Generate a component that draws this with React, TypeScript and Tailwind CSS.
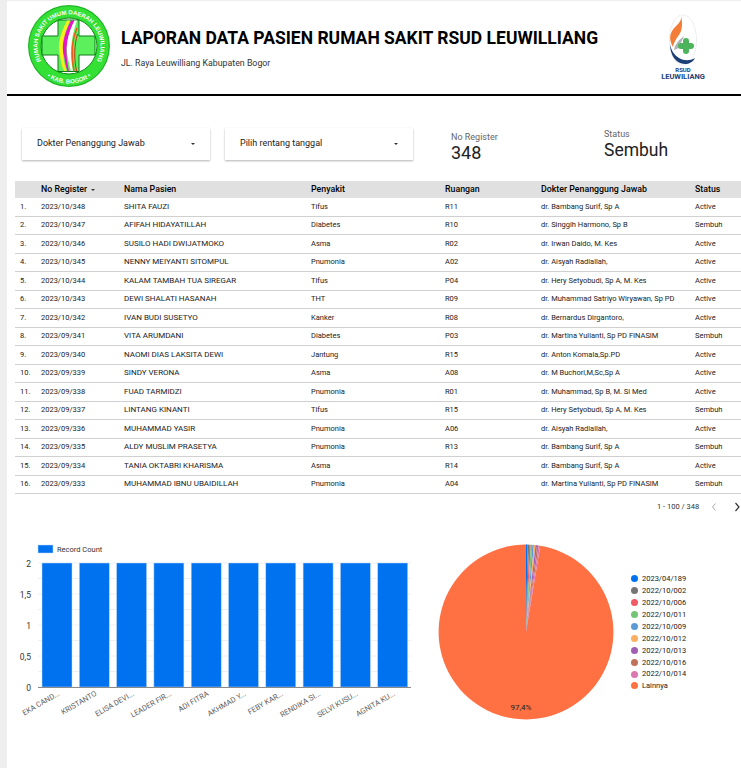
const rows = [
  ["2023/10/348", "SHITA FAUZI", "Tifus", "R11", "dr. Bambang Surif, Sp A", "Active"],
  ["2023/10/347", "AFIFAH HIDAYATILLAH", "Diabetes", "R10", "dr. Singgih Harmono, Sp B", "Sembuh"],
  ["2023/10/346", "SUSILO HADI DWIJATMOKO", "Asma", "R02", "dr. Irwan Daido, M. Kes", "Active"],
  ["2023/10/345", "NENNY MEIYANTI SITOMPUL", "Pnumonia", "A02", "dr. Aisyah Radiallah,", "Active"],
  ["2023/10/344", "KALAM TAMBAH TUA SIREGAR", "Tifus", "P04", "dr. Hery Setyobudi, Sp A, M. Kes", "Active"],
  ["2023/10/343", "DEWI SHALATI HASANAH", "THT", "R09", "dr. Muhammad Satriyo Wiryawan, Sp PD", "Active"],
  ["2023/10/342", "IVAN BUDI SUSETYO", "Kanker", "R08", "dr. Bernardus Dirgantoro,", "Active"],
  ["2023/09/341", "VITA ARUMDANI", "Diabetes", "P03", "dr. Martina Yulianti, Sp PD FINASIM", "Sembuh"],
  ["2023/09/340", "NAOMI DIAS LAKSITA DEWI", "Jantung", "R15", "dr. Anton Komala,Sp.PD", "Active"],
  ["2023/09/339", "SINDY VERONA", "Asma", "A08", "dr. M Buchori,M,Sc,Sp A", "Active"],
  ["2023/09/338", "FUAD TARMIDZI", "Pnumonia", "R01", "dr. Muhammad, Sp B, M. Si Med", "Active"],
  ["2023/09/337", "LINTANG KINANTI", "Tifus", "R15", "dr. Hery Setyobudi, Sp A, M. Kes", "Sembuh"],
  ["2023/09/336", "MUHAMMAD YASIR", "Pnumonia", "A06", "dr. Aisyah Radiallah,", "Active"],
  ["2023/09/335", "ALDY MUSLIM PRASETYA", "Pnumonia", "R13", "dr. Bambang Surif, Sp A", "Sembuh"],
  ["2023/09/334", "TANIA OKTABRI KHARISMA", "Asma", "R14", "dr. Bambang Surif, Sp A", "Active"],
  ["2023/09/333", "MUHAMMAD IBNU UBAIDILLAH", "Pnumonia", "A04", "dr. Martina Yulianti, Sp PD FINASIM", "Sembuh"],
];

const barLabels = ["EKA CAND...", "KRISTANTO", "ELISA DEVI...", "LEADER FIR...", "ADI FITRA", "AKHMAD Y...", "FEBY KAR...", "RENDIKA SI...", "SELVI KUSU...", "AGNITA KU..."];

const legend = [
  ["2023/04/189", "#0072f0"],
  ["2022/10/002", "#757575"],
  ["2022/10/006", "#ef5a64"],
  ["2022/10/011", "#74c476"],
  ["2022/10/009", "#5b9bd5"],
  ["2022/10/012", "#fdae61"],
  ["2022/10/013", "#a05eb5"],
  ["2022/10/016", "#c1705a"],
  ["2022/10/014", "#dd77b0"],
  ["Lainnya", "#ff7043"],
];

const gridCols = "grid grid-cols-[26px_83px_187px_134px_96px_154px_46px]";

function HospitalLogo() {
  return (
    <svg width="84" height="84" viewBox="0 0 84 84" className="shrink-0 -translate-y-[2px]" aria-hidden="true">
      <defs>
        <path id="ringTop" d="M16.200 60A31.500 31.500 0 1 1 67.800 60" />
        <path id="ringBottom" d="M20.500 72.700A37.500 37.500 0 0 0 63.500 72.700" />
      </defs>
      <circle cx="42" cy="42" r="41" fill="#1fb628" />
      <circle cx="42" cy="42" r="39.800" fill="#35e035" />
      <circle cx="42" cy="42" r="28" fill="#fff" stroke="#0f8a1a" strokeWidth="1" />
      <path d="M31 16H52V32H68V51H52V67.500H31V51H15V32H31Z" fill="#5cf05c" stroke="#0f7a1a" strokeWidth="1" />
      <path d="M40 16.500C33 30 30 42 33 52C34 58 35 63 37 67H39.500C36 55 33 40 43 16.500Z" fill="#f5ef1a" />
      <path d="M44 16.500C37 30 34 42 37 52C38 58 39 63 40.500 67H42C39 52 37 38 47.500 16.500Z" fill="#e616c8" />
      <path d="M47.500 16.500C41 30 38 42 41 54C42 60 43 64 44 67H46C43 52 43 36 50 16.500Z" fill="#fff" />
      <path d="M50 24C44 38 44 52 47 67" fill="none" stroke="#f05a14" strokeWidth="1.400" />
      <path d="M50.500 30C47 42 47 55 49.500 67" fill="none" stroke="#d8240f" strokeWidth="1" />
      <text fontFamily="Liberation Sans, sans-serif" fontSize="6" fontWeight="700" fill="#fff">
        <textPath href="#ringTop" startOffset="50%" textAnchor="middle">RUMAH SAKIT UMUM DAERAH LEUWILIANG</textPath>
      </text>
      <text fontFamily="Liberation Sans, sans-serif" fontSize="6" fontWeight="700" fill="#fff">
        <textPath href="#ringBottom" startOffset="50%" textAnchor="middle">• KAB. BOGOR •</textPath>
      </text>
    </svg>
  );
}

function RsudLogo() {
  return (
    <div className="flex w-[46px] shrink-0 -translate-y-[1px] flex-col items-center">
      <svg width="30" height="52" viewBox="0 0 30 52" aria-hidden="true">
        <ellipse cx="15" cy="26" rx="13.500" ry="25" fill="none" stroke="#c9ccd2" strokeWidth="0.700" strokeDasharray="1 1" />
        <path d="M13 2C14 8 9 10 4 17C1 22 2 28 5 33C6 28 8 25 11 21C14 17 15 10 13 2Z" fill="#f37c36" />
        <path d="M6 36C7 30 11 26 16 22C14 27 12 30 11 34Z" fill="#b0b3b8" />
        <path d="M2 30C2 40 7 50 17 50C21 50 25 48 27 44C22 47 16 47 11 44C6 41 3 36 2 30Z" fill="#1d3f78" />
        <path d="M15 27a3 3 0 0 1 6 0v2h2a3 3 0 0 1 0 6h-2v2a3 3 0 0 1-6 0v-2h-2a3 3 0 0 1 0-6h2Z" fill="#4cb45a" />
      </svg>
      <div className="mt-[1px] text-[6px] font-bold leading-[6px] text-[#1d3f78]">RSUD</div>
      <div className="text-[7.500px] font-bold leading-[7px] text-[#1d3f78]">LEUWILIANG</div>
    </div>
  );
}

function Dropdown({ label }: { label: string }) {
  return (
    <div className="flex h-[32px] w-[188px] items-center justify-between pl-[15px] pr-[15px] shadow-[0_1px_2px_rgba(0,0,0,0.3)]">
      <span className="text-[9px] text-[#212121]">{label}</span>
      <span className="h-0 w-0 border-x-[2px] border-t-[2px] border-x-transparent border-t-[#333]" />
    </div>
  );
}

function BarChart() {
  const ticks = [0, 1, 2, 3, 4, 5, 6, 7, 8];
  const tickLabels = ["0", "0,5", "1", "1,5", "2"];
  return (
    <svg width="420" height="190" viewBox="0 0 420 190" className="shrink-0" aria-label="Record Count">
      <g transform="translate(-7,0)">
        {ticks.map((t) => (
          <line key={t} x1="38" x2="411" y1={157 - t * 15.5} y2={157 - t * 15.5} stroke="#f0f0f0" strokeWidth="1" />
        ))}
        {barLabels.map((label, i) => {
          const x = 42 + i * 37.3;
          return (
            <g key={label}>
              <rect x={x} y="33" width="30" height="124" fill="#0072f0" stroke="#bcd9fb" strokeWidth="0.500" />
              <text
                x={x + 18}
                y="165"
                transform={`rotate(-30 ${x + 18} 165)`}
                textAnchor="end"
                fontFamily="Roboto, sans-serif"
                fontSize="7.500"
                fill="#5f5f5f"
              >
                {label}
              </text>
            </g>
          );
        })}
        <line x1="38" x2="411" y1="157.500" y2="157.500" stroke="#8a8a8a" strokeWidth="1" />
        {tickLabels.map((t, i) => (
          <text key={t} x="31" y={160.5 - i * 31} textAnchor="end" fontFamily="Roboto, sans-serif" fontSize="8.500" fill="#333">
            {t}
          </text>
        ))}
        <rect x="38" y="15" width="15" height="8" fill="#0072f0" stroke="#bcd9fb" strokeWidth="0.500" />
        <text x="57" y="22" fontFamily="Roboto, sans-serif" fontSize="7.500" fill="#333">
          Record Count
        </text>
      </g>
    </svg>
  );
}

function wedge(from: number, to: number) {
  const r = 87.4;
  const cx = 88;
  const cy = 88;
  const pt = (a: number) => {
    const rad = (a * Math.PI) / 180;
    return `${(cx + r * Math.sin(rad)).toFixed(2)} ${(cy - r * Math.cos(rad)).toFixed(2)}`;
  };
  const large = to - from > 180 ? 1 : 0;
  return `M${cx} ${cy}L${pt(from)}A${r} ${r} 0 ${large} 1 ${pt(to)}Z`;
}

function PieChart() {
  const step = 9.4 / 9;
  return (
    <svg width="176" height="176" viewBox="0 0 176 176" className="shrink-0" aria-label="Pie chart">
      <path d={wedge(9.4, 360)} fill="#ff7043" />
      {legend.slice(0, 9).map(([name, color], i) => (
        <path key={name} d={wedge(i * step, (i + 1) * step)} fill={color} />
      ))}
      <text x="83" y="166" textAnchor="middle" fontFamily="Roboto, sans-serif" fontSize="8" fill="#222">
        97,4%
      </text>
    </svg>
  );
}

export default function App() {
  return (
    <div className="h-[768px] w-[741px] overflow-hidden border-l-[7px] border-t border-[#eeeeee] bg-white font-['Roboto',sans-serif]">
      {/* Header */}
      <div className="flex h-[95px] items-center border-b-[2px] border-black pl-[20px] pr-[35px]">
        <HospitalLogo />
        <div className="ml-[10px] flex-1">
          <h1 className="text-[17.500px] font-bold leading-[24px] text-black">LAPORAN DATA PASIEN RUMAH SAKIT RSUD LEUWILLIANG</h1>
          <p className="mt-[7px] text-[8.800px] leading-[12px] text-[#333]">JL. Raya Leuwilliang Kabupaten Bogor</p>
        </div>
        <RsudLogo />
      </div>

      {/* Filters and scorecards */}
      <div className="mt-[32px] flex h-[53px] items-start pl-[15px]">
        <Dropdown label="Dokter Penanggung Jawab" />
        <div className="ml-[15px]">
          <Dropdown label="Pilih rentang tanggal" />
        </div>
        <div className="ml-[38px] mt-[4px] w-[153px]">
          <div className="text-[9px] leading-[11px] text-[#666]">No Register</div>
          <div className="text-[18px] leading-[19px] text-[#212121]">348</div>
        </div>
        <div className="mt-[1px]">
          <div className="text-[9px] leading-[11px] text-[#666]">Status</div>
          <div className="text-[17.500px] leading-[21px] text-[#212121]">Sembuh</div>
        </div>
      </div>

      {/* Table */}
      <div className="ml-[8px] text-[7.500px] text-[#222]">
        <div className={`${gridCols} h-[17px] items-center bg-[#e0e0e0] text-[8.800px] font-medium text-black`}>
          <div />
          <div className="flex items-center gap-[4px]">
            No Register
            <span className="h-0 w-0 border-x-[2px] border-t-[2px] border-x-transparent border-t-[#333]" />
          </div>
          <div>Nama Pasien</div>
          <div>Penyakit</div>
          <div>Ruangan</div>
          <div>Dokter Penanggung Jawab</div>
          <div>Status</div>
        </div>
        {rows.map((row, i) => (
          <div key={row[0]} className={`${gridCols} h-[18.500px] items-center border-b border-[#d0d0d0] leading-[10px]`}>
            <div className="pl-[5px]">{i + 1}.</div>
            {row.map((cell, j) => (
              <div key={j} className={j === 1 ? "whitespace-nowrap text-[8px]" : "whitespace-nowrap"}>
                {cell}
              </div>
            ))}
          </div>
        ))}
      </div>

      {/* Pagination */}
      <div className="mt-[7px] flex h-[12px] items-center pl-[650px] text-[7.500px] text-[#333]">
        <span className="w-[53px] whitespace-nowrap">1 - 100 / 348</span>
        <svg width="8" height="10" viewBox="0 0 8 10" className="shrink-0" aria-hidden="true">
          <path d="M5.500 1.500L2.500 5l3 3.500" fill="none" stroke="#aaa" strokeWidth="1" />
        </svg>
        <svg width="8" height="10" viewBox="0 0 8 10" className="ml-[15px] shrink-0" aria-hidden="true">
          <path d="M2.500 1L6 5l-3.500 4" fill="none" stroke="#333" strokeWidth="1.200" />
        </svg>
      </div>

      {/* Charts */}
      <div className="mt-[17px] flex items-start">
        <BarChart />
        <div className="mt-[14px] ml-[11px]">
          <PieChart />
        </div>
        <div className="ml-[17px] mt-[43px] flex flex-col">
          {legend.map(([name, color]) => (
            <div key={name} className="flex h-[11.900px] items-center gap-[4px] text-[7.500px] text-[#222]">
              <span className="h-[7px] w-[7px] rounded-full" style={{ backgroundColor: color }} />
              {name}
            </div>
          ))}
        </div>
      </div>
    </div>
  );
}
